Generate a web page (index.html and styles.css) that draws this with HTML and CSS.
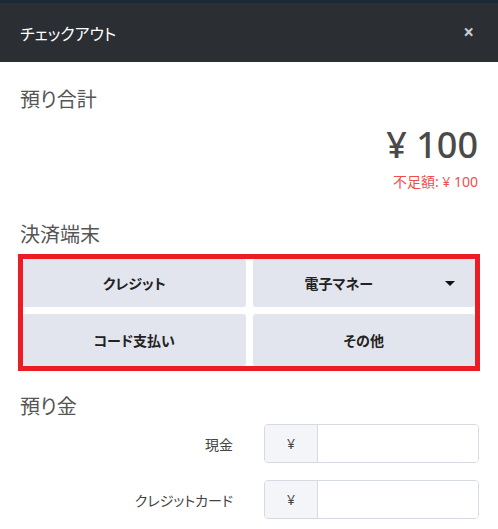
FILE: index.html
```html
<!DOCTYPE html>
<html lang="ja">
<head>
<meta charset="utf-8">
<link rel="stylesheet" href="styles.css">
</head>
<body>
<div class="topline"></div>
<header class="header">
  <div class="title">チェックアウト</div>
  <div class="close">×</div>
</header>
<main class="content">
  <h2 class="section-title">預り合計</h2>
  <div class="total">¥ 100</div>
  <div class="shortage">不足額: ¥ 100</div>

  <h2 class="section-title terminal-title">決済端末</h2>
  <div class="highlight">
    <div class="btn-grid">
      <button class="pay-btn row1">クレジット</button>
      <button class="pay-btn row1 dropdown"><span class="btn-label">電子マネー</span><span class="caret"></span></button>
      <button class="pay-btn row2">コード支払い</button>
      <button class="pay-btn row2">その他</button>
    </div>
  </div>

  <h2 class="section-title deposit-title">預り金</h2>
  <div class="field">
    <label class="field-label">現金</label>
    <div class="input-group"><span class="prefix">¥</span><span class="input"></span></div>
  </div>
  <div class="field">
    <label class="field-label">クレジットカード</label>
    <div class="input-group"><span class="prefix">¥</span><span class="input"></span></div>
  </div>
</main>
</body>
</html>
```
FILE: styles.css
```css
* { box-sizing: border-box; }
html, body {
  margin: 0;
  padding: 0;
  background: #fff;
  font-family: "Noto Sans", "Noto Sans CJK JP", sans-serif;
}
.topline {
  height: 3px;
  background: #1c2a37;
}
.header {
  height: 59px;
  background: #2b2f33;
  display: flex;
  align-items: center;
  justify-content: space-between;
  padding: 0 24px 0 20px;
}
.title {
  color: #fff;
  font-size: 16px;
  font-family: "Noto Sans CJK JP", sans-serif;
  font-feature-settings: "palt";
}
.close {
  color: #c8cbd0;
  font-size: 19px;
  font-weight: 700;
  line-height: 1;
}
.content {
  padding: 0 18px 0 20px;
}
.section-title {
  margin: 25px 0 0;
  font-size: 20px;
  font-weight: 400;
  line-height: 24px;
  color: #555;
  font-family: "Noto Sans CJK JP", sans-serif;
  font-feature-settings: "palt";
}
.total {
  margin-top: 12px;
  text-align: right;
  font-size: 36px;
  line-height: 43px;
  font-weight: 500;
  color: #4a4a4a;
  padding-right: 2px;
}
.shortage {
  margin-top: 7px;
  text-align: right;
  font-size: 14px;
  line-height: 18px;
  color: #f04e4e;
  padding-right: 2px;
  font-family: "Noto Sans", "Noto Sans CJK JP", sans-serif;
}
.terminal-title {
  margin-top: 31px;
}
.highlight {
  margin: 8px 0 0 -2px;
  border: 5px solid #ec1c24;
  width: 462px;
}
.btn-grid {
  display: grid;
  grid-template-columns: 1fr 1fr;
  grid-template-rows: 48px 52px;
  column-gap: 7px;
  row-gap: 7px;
}
.pay-btn {
  border: none;
  margin: 0;
  background: #e3e5ee;
  border-radius: 3px;
  font-family: "Noto Sans CJK JP", sans-serif;
  font-feature-settings: "palt";
  font-size: 14px;
  font-weight: 700;
  color: #222;
  display: flex;
  align-items: center;
  justify-content: center;
  padding: 0;
}
.dropdown {
  justify-content: space-between;
}
.btn-label {
  flex: 1;
  text-align: center;
}
.caret {
  width: 0;
  height: 0;
  border-left: 5px solid transparent;
  border-right: 5px solid transparent;
  border-top: 5px solid #111;
  margin: 0 20px 0 20px;
}
.deposit-title {
  margin-top: 23px;
}
.field {
  display: flex;
  align-items: center;
  margin-top: 6px;
}
.field + .field {
  margin-top: 17px;
}
.field-label {
  width: 213px;
  text-align: right;
  font-size: 14px;
  color: #444;
  font-family: "Noto Sans CJK JP", sans-serif;
  font-feature-settings: "palt";
}
.input-group {
  margin-left: 31px;
  width: 215px;
  height: 39px;
  display: flex;
  border: 1px solid #d6dae2;
  border-radius: 4px;
  overflow: hidden;
}
.prefix {
  width: 53px;
  background: #f4f5f8;
  border-right: 1px solid #d6dae2;
  display: flex;
  align-items: center;
  justify-content: center;
  font-size: 14px;
  color: #444;
}
.input {
  flex: 1;
  background: #fff;
}
```
